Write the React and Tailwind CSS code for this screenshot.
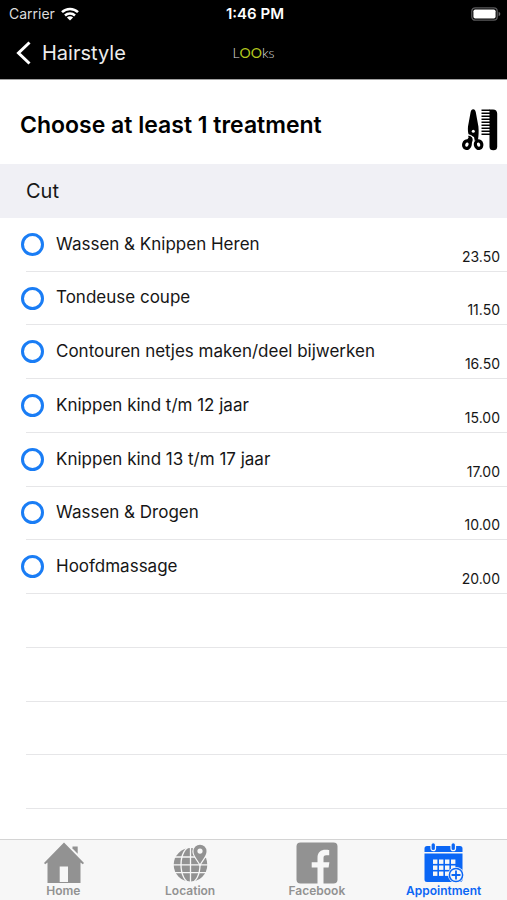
import React from "react";

const treatments = [
  { id: "wash-cut", name: "Wassen & Knippen Heren", price: "23.50" },
  { id: "clipper", name: "Tondeuse coupe", price: "11.50" },
  { id: "contour", name: "Contouren netjes maken/deel bijwerken", price: "16.50" },
  { id: "kids-12", name: "Knippen kind t/m 12 jaar", price: "15.00" },
  { id: "kids-17", name: "Knippen kind 13 t/m 17 jaar", price: "17.00" },
  { id: "wash-dry", name: "Wassen & Drogen", price: "10.00" },
  { id: "massage", name: "Hoofdmassage", price: "20.00" },
];

const emptyRows = [1, 2, 3, 4];

function WifiIcon() {
  return (
    <svg width="18" height="14" viewBox="0 0 18 14" fill="none" stroke="#fff" strokeWidth="2.5" aria-hidden="true">
      <path d="M1 5.2C5.4.8 12.6.8 17 5.2" />
      <path d="M4 8.5c2.8-2.700 7.200-2.700 10 0" />
      <path d="M9 13.6 5.900 10.500c1.700-1.600 4.500-1.600 6.200 0Z" fill="#fff" stroke="none" />
    </svg>
  );
}

function BatteryIcon() {
  return (
    <svg width="30" height="15" viewBox="0 0 30 15" aria-hidden="true">
      <rect x="0.8" y="0.8" width="25.4" height="12.4" rx="3.4" fill="none" stroke="#59595b" strokeWidth="1.3" />
      <rect x="2.4" y="2.4" width="22.2" height="9.200" rx="1.800" fill="#fff" />
      <path d="M27.600 4.800c2.300.8 2.300 3.600 0 4.400Z" fill="#6b6b6d" />
    </svg>
  );
}

function ScissorsCombIcon() {
  return (
    <svg width="36" height="42" viewBox="0 0 36 42" aria-hidden="true">
      <path d="M11.200 0.300C9.800 0.300 9 1.600 8.600 3.200L6 17.500c-.3 3 0 6 .7 8.200l5.300 2.300.8 4 3.200-1.200c.6-4 .9-8 .4-13.300L13.800 3.200C13.400 1.600 12.600.3 11.200.3Z" />
      <circle cx="11.300" cy="22.300" r="1.500" fill="#fff" />
      <path d="M6 26.500c3 .2 5.400 2 4.600 5.200L9.200 35.500 5 31l1.600-2.400Z" />
      <path d="M6 25.800c4 .4 6.200 2.600 5.300 6.800" stroke="#fff" strokeWidth="1" fill="none" />
      <ellipse cx="4.900" cy="35.600" rx="3.200" ry="3.800" transform="rotate(16 4.900 35.600)" fill="#fff" stroke="#000" strokeWidth="3.200" />
      <ellipse cx="16.600" cy="35.600" rx="3.200" ry="3.800" transform="rotate(-16 16.600 35.600)" fill="#fff" stroke="#000" strokeWidth="3.200" />
      <path d="M27.500 0.500H31c2.600 0 4.200 1.600 4.200 4.200V37.500a3.850 3.850 0 0 1-7.700 0Z" />
      <path d="M19.500 1.300h8.500M19.500 4.300h8.500M19.500 7.300h8.500M19.500 10.300h8.500M19.500 13.300h8.500M19.500 16.300h8.500M19.500 19.300h8.500M19.500 22.300h8.500M19.500 25.300h8.500" stroke="#000" strokeWidth="1.400" />
    </svg>
  );
}

function HomeIcon() {
  return (
    <svg width="42" height="42" viewBox="0 0 42 42" fill="#929292" aria-hidden="true">
      <path d="M30.500 4.500h5.200v7.200l-5.200-5.200Z" />
      <path fillRule="evenodd" d="M22 0.500 42 21l-1.200 1.200-2.300-1.700v20.500h-33V20.500l-2.300 1.700L2 21ZM17.700 24.500v15.500h8.300v-15.500Z" />
    </svg>
  );
}

function LocationIcon() {
  return (
    <svg width="36" height="42" viewBox="0 0 36 42" aria-hidden="true">
      <circle cx="18.500" cy="22.800" r="16.800" fill="#929292" />
      <g fill="none" stroke="#f7f7f7" strokeWidth="1.300">
        <path d="M18.500 5v36M1 22.800h35M3 15h32M3 30.600h32" />
        <ellipse cx="18.500" cy="22.800" rx="9.500" ry="18" />
      </g>
      <path
        d="M28 22C25.500 17.500 21.500 13.600 21.500 9.200a6.500 6.500 0 0 1 13 0c0 4.400-4 8.300-6.500 12.800Z"
        fill="#929292" stroke="#f7f7f7" strokeWidth="2.400" paintOrder="stroke"
      />
      <circle cx="28" cy="9.100" r="2.600" fill="#f7f7f7" />
    </svg>
  );
}

function FacebookIcon() {
  return (
    <svg width="42" height="42" viewBox="0 0 42 42" aria-hidden="true">
      <rect x="0.500" y="0.500" width="41" height="41" rx="4" fill="#929292" />
      <path d="M21.500 42V25.500h-5.800v-5.200h5.800v-4.600c0-5.600 3.400-8 8-8 1.600 0 2.500.1 3.700.3v5.300h-2.900c-2.300 0-2.800 1.100-2.800 3v4h5.900l-.8 5.200h-5.100V42Z" fill="#f7f7f7" />
    </svg>
  );
}

function CalendarIcon() {
  const columns = [10, 16, 22, 28];
  const rows = [17.5, 23.5, 29.5];
  return (
    <svg width="42" height="42" viewBox="0 0 42 42" aria-hidden="true">
      <path d="M4 4H37a2.500 2.500 0 0 1 2.500 2.500V10H1.500V6.500A2.500 2.500 0 0 1 4 4ZM1.500 11.500h38v26A2.500 2.500 0 0 1 37 40H4A2.500 2.500 0 0 1 1.500 37.500Z" fill="#0a66f5" />
      <g fill="#0a66f5" stroke="#f7f7f7" strokeWidth="1.200">
        <rect x="8" y="0.600" width="4.500" height="8" rx="2.200" />
        <rect x="28" y="0.600" width="4.500" height="8" rx="2.200" />
      </g>
      {rows.map((y) =>
        columns.map((x) => <rect key={`${x}-${y}`} x={x} y={y} width="4.400" height="4.400" fill="#f7f7f7" />)
      )}
      <circle cx="33" cy="33" r="8" fill="#f7f7f7" />
      <circle cx="33" cy="33" r="6.600" fill="#f7f7f7" stroke="#0a66f5" strokeWidth="1.500" />
      <path d="M33 28.500v9M28.500 33h9" stroke="#0a66f5" strokeWidth="1.800" />
    </svg>
  );
}

const tabs = [
  { label: "Home", Icon: HomeIcon },
  { label: "Location", Icon: LocationIcon },
  { label: "Facebook", Icon: FacebookIcon },
  { label: "Appointment", Icon: CalendarIcon, active: true },
];

export default function App() {
  return (
    <div className="flex min-h-screen flex-col bg-white font-['Inter',sans-serif] text-[#161616]">
      <header className="border-b border-[#a0a0a0] bg-black text-white">
        <div className="grid h-7 grid-cols-3 items-center pr-1.5 pl-[9px]">
          <div className="flex items-center gap-1.5 text-sm text-[#dcdcdc]">
            <span>Carrier</span>
            <WifiIcon />
          </div>
          <span className="text-center text-[15px] font-semibold">1:46 PM</span>
          <div className="flex justify-end">
            <BatteryIcon />
          </div>
        </div>
        <nav className="grid h-[51px] grid-cols-3 items-center px-4 pb-0.5">
          <button type="button" className="flex items-center gap-[11px] text-xl text-[#ececec]">
            <svg width="15" height="24" viewBox="0 0 15 24" fill="none" stroke="#fff" strokeWidth="3" aria-hidden="true">
              <path d="M13.500 1.500 2.500 12l11 10.500" />
            </svg>
            Hairstyle
          </button>
          <span className="text-center font-['Lato',sans-serif] text-sm font-light text-[#dcdcdc]">
            L<span className="font-normal text-[#b4c81e]">OO</span>ks
          </span>
        </nav>
      </header>

      <main className="flex flex-1 flex-col">
        <div className="flex h-[84px] items-center justify-between pr-[9px] pl-5">
          <h1 className="pt-1.5 text-[23px] font-semibold text-black">Choose at least 1 treatment</h1>
          <div className="pt-4">
            <ScissorsCombIcon />
          </div>
        </div>
        <h2 className="flex h-[54px] items-center bg-[#f0f0f5] pl-[26px] text-xl">Cut</h2>
        <ul className="grid flex-1 auto-rows-fr pb-[30px]">
          {treatments.map((t) => (
            <li key={t.id} className="flex min-h-[53px] flex-col">
              <div className="flex flex-1 items-center pr-[7px] pl-[21px]">
                <input
                  id={t.id}
                  type="checkbox"
                  className="size-[23px] shrink-0 appearance-none rounded-full border-[3px] border-[#1a7df5] bg-white checked:bg-[#1a7df5]"
                />
                <label htmlFor={t.id} className="flex-1 pl-3 text-[17px]">{t.name}</label>
                <span className="self-end pb-1 text-sm">{t.price}</span>
              </div>
              <div className="ml-[26px] h-px bg-[#e6e6e8]" />
            </li>
          ))}
          {emptyRows.map((n) => (
            <li key={n} className="flex min-h-[53px] flex-col justify-end" aria-hidden="true">
              <div className="ml-[26px] h-px bg-[#e6e6e8]" />
            </li>
          ))}
        </ul>
      </main>

      <nav className="grid h-[61px] grid-cols-4 border-t border-[#d4d4d4] bg-[#f7f7f7]">
        {tabs.map(({ label, Icon, active }) => (
          <a
            key={label}
            href="#"
            className={`flex flex-col items-center pt-0.5 text-xs font-semibold ${active ? "text-[#0a66f5]" : "text-[#929292]"}`}
          >
            <Icon />
            <span className="leading-[14px]">{label}</span>
          </a>
        ))}
      </nav>
    </div>
  );
}
